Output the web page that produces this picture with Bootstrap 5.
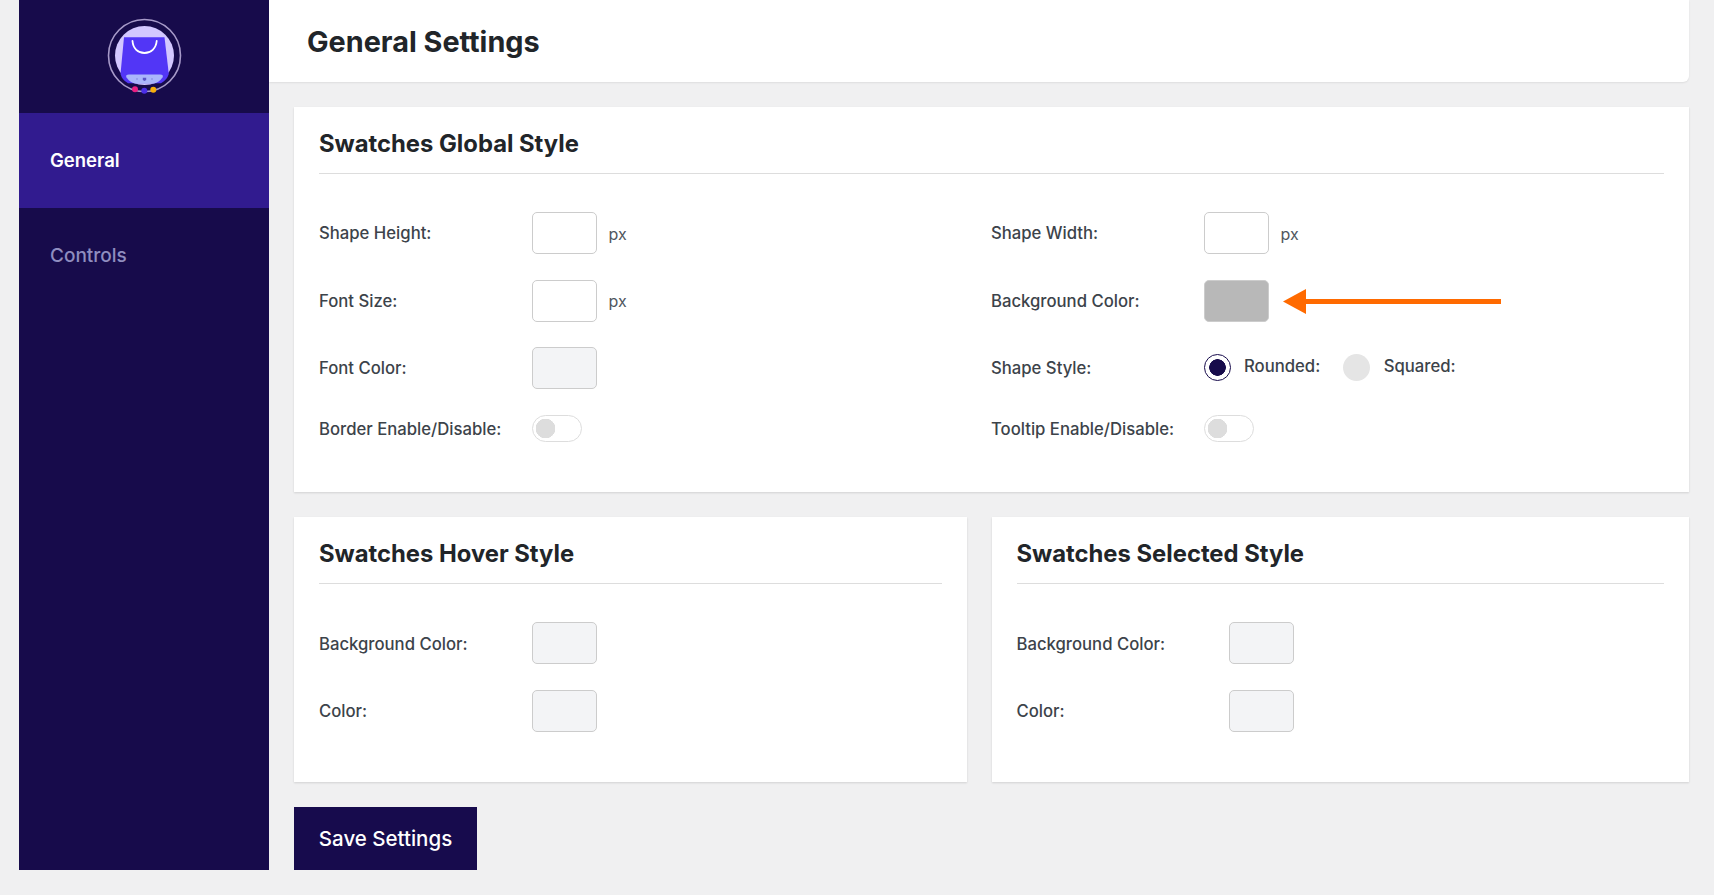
<!DOCTYPE html>
<html lang="en">
<head>
<meta charset="utf-8">
<title>General Settings</title>
<link href="https://cdn.jsdelivr.net/npm/bootstrap@5.3.0/dist/css/bootstrap.min.css" rel="stylesheet">
<style>
html,body{height:100%}
body{background:#f0f0f1;font-family:Inter,"Liberation Sans",sans-serif;color:#3c434a;overflow:hidden}
.page-wrap{padding:0 25px 25px 19px;min-height:895px}
.side-panel{width:250px;background:#170b4b;flex:none}
.logo-box{height:113px;padding-top:16px}
.side-link{height:95px;padding:2px 0 0 31px;color:#8f8dbf;font-size:19px;font-weight:500;display:flex;align-items:center}
.side-link:hover{color:#8f8dbf}
.side-link.active-item,.side-link.active-item:hover{background:#311b8f;color:#fff;font-size:18.5px;font-weight:600;padding-top:0}
.main-col{min-width:0}
.top-head{height:82px;padding:2px 0 0 38px;border-radius:0 0 6px 0;box-shadow:0 1px 2px rgba(0,0,0,.08)}
.top-head h1{font-size:28.8px;font-weight:700;color:#212529;margin:0}
.main-inner{padding:25px 0 0 25px;display:flex;flex-direction:column;gap:25px}
.set-card{box-shadow:0 1px 2px rgba(0,0,0,.13);--bs-card-border-radius:0}
.set-card .card-body{padding:18px 25px 50.5px}
.set-title{font-size:23.8px;font-weight:700;color:#212529;height:49px;line-height:38px;margin:0 0 38px;border-bottom:1px solid #ddd}
.two-cols{display:grid;grid-template-columns:647px 1fr;column-gap:25px}
.lower-cols{display:grid;grid-template-columns:672.5px 1fr;column-gap:25px}
.form-stack{display:flex;flex-direction:column;gap:25.5px}
.form-line{display:flex;align-items:center;min-height:27px}
.form-line.radio-line{min-height:42px}
.line-label{width:212.5px;flex:none;font-size:16.7px;font-weight:500;margin:2px 0 0;color:#3c434a}
.form-control.num-box{width:65px;height:42px;padding:0;border:1px solid #ccc;border-radius:5px;background:#fff;flex:none}
.form-control.col-box{background:#f3f4f6}
.form-control.col-box.grey-fill{background:#b8b8b8}
.unit-txt{margin:1px 0 0 12px;font-size:16px;color:#50575e}
.arrow-mark{margin:2px 0 0 14.500px;flex:none}
.form-check-input.pick-radio{width:27px;height:27px;margin:-1px 0 0;flex:none;background-color:#e5e5e5;border:0;background-image:none}
.form-check-input.pick-radio:checked{background-color:#fff;background-image:radial-gradient(circle at center,#170b4b 0,#170b4b 8px,transparent 8.6px);border:1px solid #170b4b}
.radio-txt{margin:-2px 0 0 13.5px;font-size:16.7px;font-weight:500;color:#3c434a}
.radio-txt.first-txt{margin-right:23px}
.form-switch .form-check-input.tog-input{width:50px;height:27px;margin:0;border:1px solid #ddd;background-color:#fff;background-image:radial-gradient(circle 10px at 12.5px 50%,#ddd 97%,transparent 100%);background-position:0 0;background-size:auto;border-radius:14px}
.switch-wrap{padding:0;min-height:0;margin:0;display:flex}
.save-btn{width:183px;height:63px;border-radius:0;background:#170b4d;border:0;color:#fff;font-size:20.5px;font-weight:500;padding:2px 0 0}
.save-btn:hover{background:#170b4d;color:#fff}
</style>
</head>
<body>
<div class="page-wrap d-flex">
  <aside class="side-panel d-flex flex-column">
    <div class="logo-box d-flex justify-content-center align-items-start">
      <svg width="80" height="84" viewBox="0 0 80 84" aria-label="Logo">
        <circle cx="40.5" cy="39.5" r="36" fill="none" stroke="#a79ac9" stroke-width="1.6"/>
        <circle cx="40.5" cy="39.500" r="29.5" fill="#d3c7ff"/>
        <path d="M20 21.300H60.500L64.800 58Q63 64 57 67.300H24Q18 64 16.500 58Z" fill="#5236f6"/>
        <path d="M25 58.500H56Q60 58.500 58.500 61.500Q55 66.500 50 67.500H31Q26 66.500 22.500 61.500Q21 58.500 25 58.500Z" fill="#aab5fb"/>
        <path d="M28.500 25C29 32.500 34 37 40.500 37S52 32.500 52.700 25" fill="none" stroke="#fff" stroke-width="1.800" stroke-linecap="round"/>
        <circle cx="33" cy="63" r=".8" fill="#7f85dc"/>
        <path d="M38.800 61.800h3.400v2.200l-1.700 1-1.700-1z" fill="#5b55c8"/>
        <circle cx="48" cy="63" r=".8" fill="#7f85dc"/>
        <circle cx="31" cy="73.300" r="3" fill="#ea1e82"/>
        <circle cx="40.300" cy="74.700" r="3" fill="#4a2ee8"/>
        <circle cx="49.300" cy="73.700" r="3" fill="#f6ae0c"/>
      </svg>
    </div>
    <nav class="nav flex-column">
      <a class="nav-link side-link active-item" href="#">General</a>
      <a class="nav-link side-link" href="#">Controls</a>
    </nav>
  </aside>
  <div class="main-col flex-grow-1">
    <header class="top-head bg-white d-flex align-items-center"><h1>General Settings</h1></header>
    <div class="main-inner">
      <section class="card set-card border-0">
        <div class="card-body">
          <h2 class="set-title">Swatches Global Style</h2>
          <div class="two-cols">
            <div class="form-stack">
              <div class="form-line"><label class="line-label">Shape Height:</label><input class="form-control num-box" type="text"><span class="unit-txt">px</span></div>
              <div class="form-line"><label class="line-label">Font Size:</label><input class="form-control num-box" type="text"><span class="unit-txt">px</span></div>
              <div class="form-line"><label class="line-label">Font Color:</label><input class="form-control num-box col-box" type="text"></div>
              <div class="form-line"><label class="line-label">Border Enable/Disable:</label><div class="form-check form-switch switch-wrap"><input class="form-check-input tog-input" type="checkbox" role="switch"></div></div>
            </div>
            <div class="form-stack">
              <div class="form-line"><label class="line-label">Shape Width:</label><input class="form-control num-box" type="text"><span class="unit-txt">px</span></div>
              <div class="form-line"><label class="line-label">Background Color:</label><input class="form-control num-box col-box grey-fill" type="text">
                <svg class="arrow-mark" width="218" height="25" viewBox="0 0 218 25"><path d="M0 12.500 23 0v10h195v5H23v10z" fill="#ff6a00"/></svg></div>
              <div class="form-line radio-line"><label class="line-label">Shape Style:</label><input class="form-check-input pick-radio" type="radio" name="shape" checked><span class="radio-txt first-txt">Rounded:</span><input class="form-check-input pick-radio" type="radio" name="shape"><span class="radio-txt">Squared:</span></div>
              <div class="form-line"><label class="line-label">Tooltip Enable/Disable:</label><div class="form-check form-switch switch-wrap"><input class="form-check-input tog-input" type="checkbox" role="switch"></div></div>
            </div>
          </div>
        </div>
      </section>
      <div class="lower-cols">
        <section class="card set-card border-0">
          <div class="card-body">
            <h2 class="set-title">Swatches Hover Style</h2>
            <div class="form-stack">
              <div class="form-line"><label class="line-label">Background Color:</label><input class="form-control num-box col-box" type="text"></div>
              <div class="form-line"><label class="line-label">Color:</label><input class="form-control num-box col-box" type="text"></div>
            </div>
          </div>
        </section>
        <section class="card set-card border-0">
          <div class="card-body">
            <h2 class="set-title">Swatches Selected Style</h2>
            <div class="form-stack">
              <div class="form-line"><label class="line-label">Background Color:</label><input class="form-control num-box col-box" type="text"></div>
              <div class="form-line"><label class="line-label">Color:</label><input class="form-control num-box col-box" type="text"></div>
            </div>
          </div>
        </section>
      </div>
      <div><button class="btn save-btn" type="button">Save Settings</button></div>
    </div>
  </div>
</div>
<script src="https://cdn.jsdelivr.net/npm/bootstrap@5.3.0/dist/js/bootstrap.bundle.min.js"></script>
</body>
</html>
